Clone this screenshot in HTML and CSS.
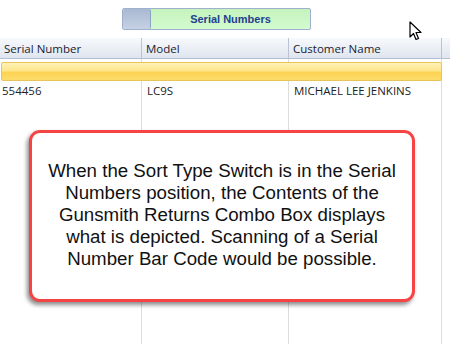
FILE: index.html
```html
<!DOCTYPE html>
<html lang="en">
<head>
    <meta charset="UTF-8">
    <meta name="viewport" content="width=device-width, initial-scale=1.0">
    <title>Gunsmith Returns</title>
    <link rel="stylesheet" href="styles.css">
</head>
<body>
    <div class="toolbar">
        <div class="sort-switch">
            <span class="switch-thumb"></span>
            <span class="switch-label">Serial Numbers</span>
        </div>
    </div>

    <div class="grid">
        <div class="grid-header">
            <div class="cell col-serial">Serial Number</div>
            <div class="cell col-model">Model</div>
            <div class="cell col-customer">Customer Name</div>
        </div>
        <div class="grid-body">
            <div class="row-selected"></div>
            <div class="row">
                <div class="cell col-serial">554456</div>
                <div class="cell col-model">LC9S</div>
                <div class="cell col-customer">MICHAEL LEE JENKINS</div>
            </div>
        </div>
    </div>

    <div class="callout">
        <p>When the Sort Type Switch is in the Serial Numbers position, the Contents of the Gunsmith Returns Combo Box displays what is depicted. Scanning of a Serial Number Bar Code would be possible.</p>
    </div>

    <svg class="cursor" width="13" height="20" viewBox="0 0 13 20">
        <path d="M1 1 L1 16 L4.5 12.5 L7 18.5 L9.5 17.5 L7 11.5 L12 11.5 Z" fill="#fff" stroke="#000" stroke-width="1.2" stroke-linejoin="round"/>
    </svg>
</body>
</html>
```

FILE: styles.css
```css
body {
    margin: 0;
    width: 450px;
    height: 344px;
    overflow: hidden;
    position: relative;
    background-color: #fff;
    font-family: "Open Sans", "Noto Sans", sans-serif;
}

.toolbar {
    height: 38px;
    padding-top: 8px;
    box-sizing: border-box;
}

.sort-switch {
    display: flex;
    width: 189px;
    height: 22px;
    margin-left: 122px;
    border: 1px solid #9fb0cf;
    border-radius: 2px;
    box-sizing: border-box;
    background: linear-gradient(#c4f3bd, #d4fbcf);
}

.switch-thumb {
    width: 27px;
    border-right: 1px solid #8ea2c4;
    border-radius: 2px;
    background: linear-gradient(#a9b9d2, #c6d2e4);
}

.switch-label {
    flex: 1;
    text-align: center;
    font-family: "Liberation Sans", Arial, sans-serif;
    font-size: 11px;
    font-weight: bold;
    line-height: 20px;
    color: #233f8e;
}

.grid {
    height: 306px;
    background-image:
        linear-gradient(#dcdcdc, #dcdcdc),
        linear-gradient(#dcdcdc, #dcdcdc),
        linear-gradient(#dcdcdc, #dcdcdc);
    background-size: 1px 100%;
    background-position: 141px 0, 288px 0, 441px 0;
    background-repeat: no-repeat;
}

.grid-header {
    display: flex;
    height: 20px;
    border-bottom: 1px solid #b4bfd2;
    background: linear-gradient(#f7f9fc, #dfe5ef);
    font-size: 11.5px;
    line-height: 22px;
    color: #1c1c30;
}

.grid-header .cell {
    border-right: 1px solid #b9c3d4;
}

.cell {
    box-sizing: border-box;
    white-space: nowrap;
    padding-left: 4px;
}

.col-serial {
    width: 142px;
}

.col-model {
    width: 147px;
}

.col-customer {
    width: 153px;
}

.grid-body {
    padding-top: 3px;
}

.row-selected {
    width: 441px;
    height: 19px;
    margin-left: 1px;
    border: 1px solid #e6c55a;
    border-radius: 2px;
    box-sizing: border-box;
    background: linear-gradient(#fff1b8, #ffe68c 45%, #fcd452 55%, #fddc6c);
}

.row {
    display: flex;
    height: 20px;
    font-size: 11.5px;
    line-height: 20px;
    color: #222;
}

.row .col-serial {
    padding-left: 2px;
}

.row .col-model {
    padding-left: 5px;
}

.row .col-customer {
    padding-left: 5px;
}

.callout {
    position: absolute;
    left: 29px;
    top: 130px;
    width: 386px;
    height: 172px;
    box-sizing: border-box;
    border: 3px solid #f64444;
    border-radius: 11px;
    background-color: #fff;
    box-shadow: -2px 3px 4px rgba(0, 0, 0, 0.45);
    display: flex;
    align-items: center;
    padding: 0 10px;
}

.callout p {
    margin: 0 0 2px;
    width: 100%;
    text-align: center;
    font-family: "Liberation Sans", Arial, sans-serif;
    font-size: 18.7px;
    line-height: 22px;
    color: #111;
}

.cursor {
    position: absolute;
    left: 409px;
    top: 21px;
}
```
